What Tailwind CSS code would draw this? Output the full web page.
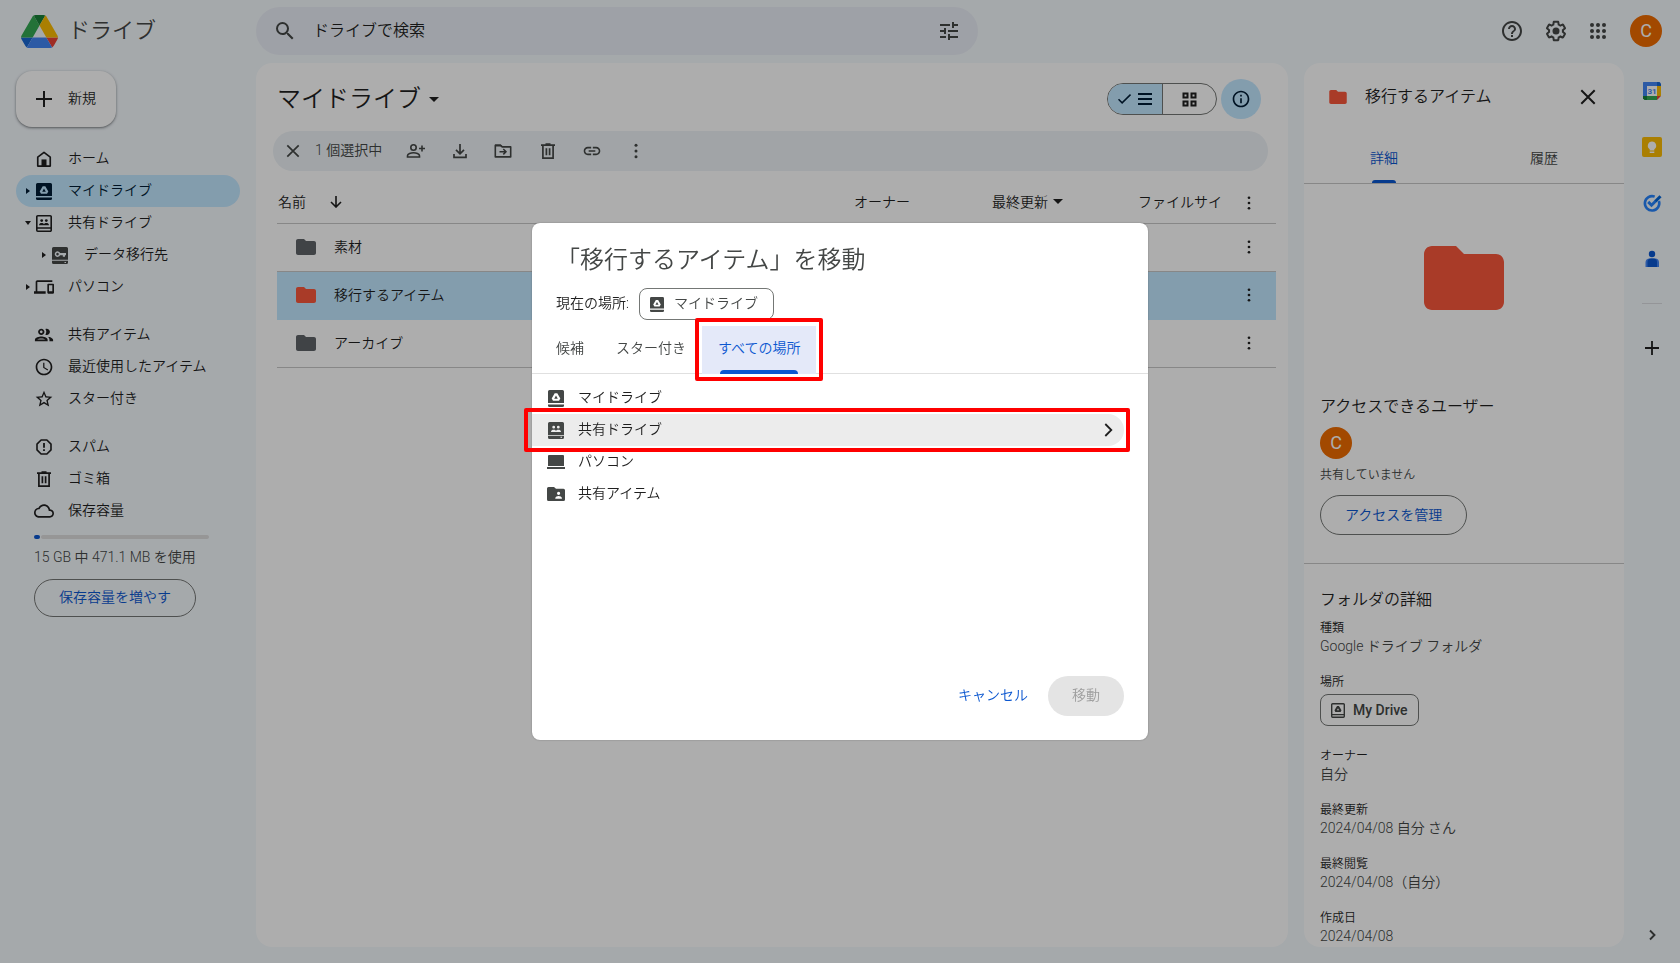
<!DOCTYPE html>
<html lang="ja">
<head>
<meta charset="utf-8">
<meta name="viewport" content="width=device-width, initial-scale=1">
<title>マイドライブ</title>
<script src="https://cdn.jsdelivr.net/npm/@tailwindcss/browser@4"></script>
</head>
<body class="h-screen overflow-hidden bg-[#f4f9fd] font-['Roboto','Noto_Sans_CJK_JP',sans-serif] text-sm font-[350] text-[#1f1f1f]">

<svg class="hidden" aria-hidden="true">
  <symbol id="folder" viewBox="2 4 20 16"><path fill="currentColor" d="M10 4H4c-1.1 0-2 .9-2 2v12c0 1.1.9 2 2 2h16c1.1 0 2-.9 2-2V8c0-1.1-.9-2-2-2h-8l-2-2z"/></symbol>
  <symbol id="dots" viewBox="0 0 24 24"><g fill="currentColor"><circle cx="12" cy="5" r="1.8"/><circle cx="12" cy="12" r="1.8"/><circle cx="12" cy="19" r="1.8"/></g></symbol>
  <symbol id="trash" viewBox="0 0 20 20"><path fill="none" stroke="currentColor" stroke-width="1.7" d="M3 4.2h14M7.500 3h5M4.900 4.500v12.600h10.200V4.500M8.400 7.200v7M11.600 7.200v7"/></symbol>
  <symbol id="drive-solid" viewBox="0 0 16 17"><path fill="currentColor" fill-rule="evenodd" d="M1.500 0h13A1.500 1.500 0 0 1 16 1.500V13H0V1.500A1.500 1.500 0 0 1 1.500 0zM6.700 3.300h2.600l3 5.200-1.300 2.300H5L3.700 8.500zM8 5.500 6.200 8.700h3.600z"/><path fill="currentColor" d="M0 14.500h16v1A1.500 1.500 0 0 1 14.500 17h-13A1.500 1.500 0 0 1 0 15.500z"/></symbol>
  <symbol id="drive-line" viewBox="0 0 16 17"><path fill="none" stroke="currentColor" stroke-width="1.600" d="M1.800.8h12.400a1 1 0 0 1 1 1v13.400a1 1 0 0 1-1 1H1.800a1 1 0 0 1-1-1V1.800a1 1 0 0 1 1-1zM1 13.200h14"/><path fill="currentColor" fill-rule="evenodd" d="M6.900 3.300h2.200l2.900 5-1 2H5l-1-2zM8 6 6.700 8.300h2.600z"/></symbol>
  <symbol id="shared-line" viewBox="0 0 16 17"><path fill="none" stroke="currentColor" stroke-width="1.600" d="M1.800.8h12.400a1 1 0 0 1 1 1v13.400a1 1 0 0 1-1 1H1.800a1 1 0 0 1-1-1V1.800a1 1 0 0 1 1-1zM1 13h14"/><g fill="currentColor"><circle cx="5.700" cy="5.600" r="1.400"/><circle cx="10.300" cy="5.600" r="1.400"/><path d="M3 10.200c0-1.700 1.400-2.300 2.600-2.300s2 .5 2.400 1c.4-.5 1.200-1 2.400-1s2.600.6 2.600 2.300z"/></g></symbol>
  <symbol id="shared-solid" viewBox="0 0 16 17"><path fill="currentColor" fill-rule="evenodd" d="M1.500 0h13A1.500 1.500 0 0 1 16 1.500v14a1.500 1.500 0 0 1-1.500 1.500h-13A1.500 1.500 0 0 1 0 15.500v-14A1.500 1.500 0 0 1 1.500 0zM4.300 5.200a1.400 1.400 0 1 0 2.800 0a1.400 1.400 0 1 0-2.800 0zM8.900 5.200a1.400 1.400 0 1 0 2.800 0a1.400 1.400 0 1 0-2.800 0zM3 10c0-1.700 1.400-2.300 2.600-2.300s2 .5 2.400 1c.4-.5 1.200-1 2.400-1s2.600.6 2.600 2.300zM0 13v.7h16v-.7zM12.500 14.800v1h1.500v-1z"/></symbol>
  <symbol id="key-solid" viewBox="0 0 16 17"><path fill="currentColor" fill-rule="evenodd" d="M1.500 0h13A1.500 1.500 0 0 1 16 1.500v14a1.500 1.500 0 0 1-1.500 1.500h-13A1.500 1.500 0 0 1 0 15.500v-14A1.500 1.500 0 0 1 1.500 0zM0 12.800v1h16v-1zM12.500 14.900v1.100h1.500v-1.100zM8.100 6H14v2.200h-1v1.600h-2.200V8.200H8.100a2.800 2.800 0 1 1 0-2.200zM5.500 5.800a1.300 1.300 0 1 0 .01 0z"/></symbol>
</svg>

<div class="flex h-full flex-col">
  <header class="flex h-[63px] shrink-0 items-start pt-[7px]">
    <a href="#" class="flex h-12 w-64 shrink-0 items-center gap-[10px] pl-[21px] text-[22px] text-[#444746]" aria-label="ドライブ">
      <svg class="h-[33px] w-[37px]" viewBox="0 0 87.300 78"><path d="m6.600 66.850 3.850 6.650c.8 1.400 1.950 2.500 3.300 3.300l13.750-23.800h-27.500c0 1.550.4 3.100 1.200 4.500z" fill="#1967d2"/><path d="m43.650 25-13.750-23.800c-1.350.8-2.500 1.900-3.300 3.300l-25.400 44a9.060 9.060 0 0 0-1.200 4.500h27.500z" fill="#34a853"/><path d="m73.550 76.800c1.350-.8 2.500-1.900 3.300-3.300l1.600-2.750 7.650-13.250c.8-1.400 1.200-2.950 1.200-4.500h-27.500z" fill="#ea4335"/><path d="m43.650 25 13.750-23.800c-1.350-.8-2.900-1.200-4.500-1.200h-18.500c-1.600 0-3.150.45-4.500 1.200z" fill="#188038"/><path d="m59.800 53h-32.300l-13.750 23.800c1.350.8 2.900 1.200 4.500 1.200h50.800c1.600 0 3.150-.45 4.500-1.200z" fill="#4285f4"/><path d="m73.400 26.500-12.700-22c-.8-1.400-1.950-2.500-3.300-3.300l-13.750 23.800 16.150 28h27.450c0-1.550-.4-3.100-1.200-4.500z" fill="#fbbc04"/></svg>
      <span>ドライブ</span>
    </a>
    <form role="search" class="flex h-12 max-w-[722px] flex-1 items-center rounded-full bg-[#e9eef6] px-[17px] text-[#444746]">
      <button type="button" aria-label="検索"><svg class="size-6" viewBox="0 0 24 24"><path fill="currentColor" d="M15.500 14h-.79l-.28-.27A6.471 6.471 0 0 0 16 9.500 6.500 6.500 0 1 0 9.500 16c1.610 0 3.090-.59 4.230-1.570l.27.28v.79l5 4.990L20.490 19l-4.990-5zm-6 0C7.010 14 5 11.990 5 9.500S7.010 5 9.500 5 14 7.010 14 9.500 11.990 14 9.500 14z"/></svg></button>
      <input type="text" aria-label="ドライブで検索" placeholder="ドライブで検索" class="ml-4 min-w-0 flex-1 bg-transparent text-base text-[#1f1f1f] outline-none placeholder:text-[#1f1f1f]">
      <button type="button" aria-label="検索オプション"><svg class="size-6" viewBox="0 0 24 24"><path fill="currentColor" d="M3 17v2h6v-2H3zM3 5v2h10V5H3zm10 16v-2h8v-2h-8v-2h-2v6h2zM7 9v2H3v2h4v2h2V9H7zm14 4v-2H11v2h10zm-6-4h2V7h4V5h-4V3h-2v6z"/></svg></button>
    </form>
    <div class="ml-auto flex h-12 items-center pr-[18px] text-[#444746]">
      <button type="button" aria-label="サポート"><svg class="size-6" viewBox="0 0 24 24"><path fill="currentColor" d="M11 18h2v-2h-2v2zm1-16C6.480 2 2 6.480 2 12s4.480 10 10 10 10-4.480 10-10S17.520 2 12 2zm0 18c-4.410 0-8-3.590-8-8s3.590-8 8-8 8 3.590 8 8-3.590 8-8 8zm0-14c-2.210 0-4 1.790-4 4h2c0-1.100.9-2 2-2s2 .9 2 2c0 2-3 1.750-3 5h2c0-2.250 3-2.500 3-5 0-2.210-1.790-4-4-4z"/></svg></button>
      <button type="button" aria-label="設定" class="ml-5"><svg class="size-6" viewBox="0 0 24 24"><path fill="currentColor" d="M13.850 22.250h-3.700c-.74 0-1.360-.54-1.450-1.270l-.27-1.890c-.27-.14-.53-.29-.79-.46l-1.800.72c-.7.26-1.470-.03-1.810-.65L2.200 15.530c-.35-.66-.2-1.440.36-1.880l1.530-1.190c-.01-.15-.02-.3-.02-.46 0-.15.01-.31.02-.46l-1.520-1.190c-.59-.45-.74-1.260-.37-1.880l1.850-3.190c.34-.62 1.110-.9 1.790-.63l1.810.73c.26-.17.52-.32.78-.46l.27-1.910c.09-.7.71-1.250 1.440-1.250h3.700c.74 0 1.360.54 1.450 1.270l.27 1.890c.27.14.53.29.79.46l1.800-.72c.71-.26 1.480.03 1.820.65l1.840 3.180c.36.66.2 1.440-.36 1.880l-1.520 1.190c.01.15.02.3.02.46s-.01.31-.02.46l1.520 1.190c.56.45.72 1.230.37 1.860l-1.860 3.220c-.34.62-1.110.9-1.800.63l-1.800-.72c-.26.17-.52.32-.78.46l-.27 1.910c-.1.68-.72 1.220-1.460 1.220zm-3.230-2h2.760l.37-2.550.53-.22c.44-.18.88-.44 1.340-.78l.45-.34 2.380.96 1.380-2.400-2.030-1.580.07-.56c.03-.26.06-.51.06-.78s-.03-.53-.06-.78l-.07-.56 2.030-1.580-1.390-2.400-2.390.96-.45-.35c-.42-.32-.87-.58-1.330-.77l-.52-.22-.37-2.550h-2.760l-.37 2.550-.53.21c-.44.19-.88.44-1.340.79l-.45.33-2.380-.95-1.390 2.390 2.030 1.580-.07.56a7 7 0 0 0-.06.79c0 .26.02.53.06.78l.07.56-2.030 1.580 1.380 2.400 2.390-.96.45.35c.43.33.86.58 1.330.77l.53.22.380 2.550z"/><circle cx="12" cy="12" r="3.500" fill="currentColor"/></svg></button>
      <button type="button" aria-label="Google アプリ" class="ml-[18px]"><svg class="size-6" viewBox="0 0 24 24" fill="currentColor"><circle cx="6" cy="6" r="2"/><circle cx="12" cy="6" r="2"/><circle cx="18" cy="6" r="2"/><circle cx="6" cy="12" r="2"/><circle cx="12" cy="12" r="2"/><circle cx="18" cy="12" r="2"/><circle cx="6" cy="18" r="2"/><circle cx="12" cy="18" r="2"/><circle cx="18" cy="18" r="2"/></svg></button>
      <button type="button" aria-label="アカウント" class="ml-5 size-8 rounded-full bg-[#ef6c00] text-lg leading-8 font-normal text-white">C</button>
    </div>
  </header>

  <div class="flex min-h-0 flex-1 pb-4">
    <aside class="w-64 shrink-0 px-4 pt-2">
      <button type="button" class="flex h-14 items-center gap-3 rounded-2xl bg-white pr-5 pl-4 shadow-[0_1px_2px_rgba(60,64,67,0.5),0_1px_3px_1px_rgba(60,64,67,0.15)]">
        <svg class="size-6" viewBox="0 0 24 24"><path d="M12 4v16M4 12h16" stroke="currentColor" stroke-width="2"/></svg>
        <span class="pb-0.5">新規</span>
      </button>
      <nav class="mt-4 text-[#1f1f1f]">
        <a href="#" class="flex h-8 items-center gap-[14px] pl-[18px]"><svg class="size-5" viewBox="0 0 24 24"><path fill="none" stroke="currentColor" stroke-width="2" stroke-linejoin="round" d="M4.500 20.500V9.800L12 4l7.500 5.800v10.700z"/><path fill="currentColor" d="M9 12.500h6v8H9z"/></svg><span class="pb-0.5">ホーム</span></a>
        <a href="#" class="flex h-8 items-center rounded-full bg-[#c2e7ff] pl-[10px] text-[#001d35]"><svg class="mr-[6px] h-[6px] w-1" viewBox="0 0 4 6"><path fill="currentColor" d="M0 0l4 3-4 3z"/></svg><svg class="h-[17px] w-4" ><use href="#drive-solid"/></svg><span class="ml-4 pb-0.5">マイドライブ</span></a>
        <a href="#" class="flex h-8 items-center pl-[9px]"><svg class="mr-[5px] h-1 w-[6px]" viewBox="0 0 6 4"><path fill="currentColor" d="M0 0h6L3 4z"/></svg><svg class="h-[17px] w-4"><use href="#shared-line"/></svg><span class="ml-4 pb-0.5">共有ドライブ</span></a>
        <a href="#" class="flex h-8 items-center pl-[26px]"><svg class="mr-[6px] h-[6px] w-1" viewBox="0 0 4 6"><path fill="currentColor" d="M0 0l4 3-4 3z"/></svg><svg class="h-[17px] w-4 text-[#444746]"><use href="#key-solid"/></svg><span class="ml-4 pb-0.5">データ移行先</span></a>
        <a href="#" class="flex h-8 items-center pl-[10px]"><svg class="mr-1 h-[6px] w-1" viewBox="0 0 4 6"><path fill="currentColor" d="M0 0l4 3-4 3z"/></svg><svg class="size-5" viewBox="0 0 24 24"><path fill="currentColor" d="M4 6h18V4H4c-1.100 0-2 .9-2 2v11H0v3h14v-3H4V6zm19 2h-6c-.55 0-1 .45-1 1v10c0 .55.450 1 1 1h6c.55 0 1-.45 1-1V9c0-.55-.45-1-1-1zm-1 9h-4v-7h4v7z"/></svg><span class="ml-[14px] pb-0.5">パソコン</span></a>
        <a href="#" class="mt-4 flex h-8 items-center gap-[14px] pl-[18px]"><svg class="size-5" viewBox="1 1 22 22"><path fill="currentColor" d="M9 13.750c-2.340 0-7 1.170-7 3.500V19h14v-1.750c0-2.330-4.660-3.500-7-3.500zM4.340 17c.84-.58 2.870-1.250 4.660-1.250s3.820.67 4.660 1.250H4.340zM9 12c1.930 0 3.500-1.570 3.500-3.500S10.930 5 9 5 5.500 6.570 5.500 8.500 7.070 12 9 12zm0-5c.83 0 1.500.67 1.500 1.500S9.830 10 9 10s-1.500-.67-1.500-1.500S8.170 7 9 7zm7.040 6.810c1.160.84 1.960 1.960 1.960 3.440V19h4v-1.750c0-2.020-3.500-3.170-5.960-3.440zM15 12c1.930 0 3.500-1.570 3.500-3.500S16.930 5 15 5c-.54 0-1.040.13-1.500.35.63.89 1 1.980 1 3.150s-.37 2.260-1 3.150c.46.22.96.35 1.500.35z"/></svg><span class="pb-0.5">共有アイテム</span></a>
        <a href="#" class="flex h-8 items-center gap-[14px] pl-[18px]"><svg class="size-5" viewBox="0 0 24 24"><path fill="currentColor" d="M11.990 2C6.470 2 2 6.480 2 12s4.470 10 9.990 10C17.520 22 22 17.520 22 12S17.520 2 11.990 2zM12 20c-4.420 0-8-3.580-8-8s3.580-8 8-8 8 3.580 8 8-3.580 8-8 8zm.5-13H11v6l5.250 3.150.75-1.230-4.500-2.670z"/></svg><span class="pb-0.5">最近使用したアイテム</span></a>
        <a href="#" class="flex h-8 items-center gap-[14px] pl-[18px]"><svg class="size-5" viewBox="0 0 24 24"><path fill="currentColor" d="M22 9.240l-7.190-.62L12 2 9.190 8.630 2 9.240l5.460 4.730L5.820 21 12 17.270 18.180 21l-1.630-7.030L22 9.240zM12 15.400l-3.760 2.270 1-4.280-3.320-2.880 4.380-.38L12 6.100l1.710 4.040 4.380.38-3.320 2.880 1 4.280L12 15.400z"/></svg><span class="pb-0.5">スター付き</span></a>
        <a href="#" class="mt-4 flex h-8 items-center gap-[14px] pl-[18px]"><svg class="size-5" viewBox="0 0 20 20"><path fill="none" stroke="currentColor" stroke-width="1.600" stroke-linejoin="round" d="M7.100 3h5.800L17 7.100v5.800L12.900 17H7.100L3 12.900V7.100z"/><path stroke="currentColor" stroke-width="1.800" d="M10 6v4.800M10 12.300v1.700"/></svg><span class="pb-0.5">スパム</span></a>
        <a href="#" class="flex h-8 items-center gap-[14px] pl-[18px]"><svg class="size-5"><use href="#trash"/></svg><span class="pb-0.5">ゴミ箱</span></a>
        <a href="#" class="flex h-8 items-center gap-[14px] pl-[18px]"><svg class="size-5" viewBox="0 0 24 24"><path fill="currentColor" d="M19.350 10.040C18.670 6.590 15.640 4 12 4 9.110 4 6.600 5.640 5.350 8.040 2.340 8.360 0 10.910 0 14c0 3.310 2.690 6 6 6h13c2.760 0 5-2.240 5-5 0-2.640-2.050-4.780-4.650-4.960zM19 18H6c-2.210 0-4-1.790-4-4 0-2.050 1.530-3.760 3.560-3.970l1.070-.11.5-.95C8.080 7.140 9.940 6 12 6c2.620 0 4.880 1.860 5.390 4.430l.3 1.500 1.530.11c1.560.1 2.780 1.410 2.780 2.960 0 1.650-1.350 3-3 3z"/></svg><span class="pb-0.5">保存容量</span></a>
      </nav>
      <div class="mt-2 pl-[18px]">
        <div class="flex h-1 w-[175px] gap-px"><span class="w-[6px] rounded-full bg-[#0b57d0]"></span><span class="flex-1 rounded-full bg-[#dddddd]"></span></div>
        <p class="mt-2 leading-5 text-[#444746]">15 GB 中 471.1 MB を使用</p>
        <button type="button" class="mt-3 h-[38px] rounded-full border border-[#747775] px-6 pb-0.5 text-[#0b57d0]">保存容量を増やす</button>
      </div>
    </aside>

    <main class="flex min-w-0 flex-1 flex-col rounded-2xl bg-white">
      <div class="flex h-[68px] shrink-0 items-center pt-1 pr-[27px] pl-[21px]">
        <h1><button type="button" class="flex items-center gap-2 text-2xl">マイドライブ<svg class="h-[5px] w-[10px]" viewBox="0 0 10 5"><path fill="currentColor" d="M0 0h10L5 5z"/></svg></button></h1>
        <div class="ml-auto flex h-8 w-[110px] overflow-hidden rounded-full border border-[#747775]">
          <button type="button" aria-label="リスト レイアウト" aria-pressed="true" class="flex flex-1 items-center justify-center gap-[7px] bg-[#c2e7ff] text-[#001d35]">
            <svg class="h-[10px] w-[13px]" viewBox="0 0 13 10"><path fill="none" stroke="currentColor" stroke-width="1.500" d="M.5 5.300l3.600 3.600L12.500.6"/></svg>
            <svg class="h-3 w-[14px]" viewBox="0 0 14 12"><path stroke="currentColor" stroke-width="2" d="M0 1h14M0 6h14M0 11h14"/></svg>
          </button>
          <button type="button" aria-label="グリッド レイアウト" aria-pressed="false" class="flex flex-1 items-center justify-center border-l border-[#747775]">
            <svg class="size-[15px]" viewBox="0 0 15 15" fill="none" stroke="currentColor" stroke-width="2"><rect x="1.500" y="1.500" width="4" height="4"/><rect x="9.500" y="1.500" width="4" height="4"/><rect x="1.500" y="9.500" width="4" height="4"/><rect x="9.500" y="9.500" width="4" height="4"/></svg>
          </button>
        </div>
        <button type="button" aria-label="詳細を表示" class="ml-1 flex size-10 items-center justify-center rounded-full bg-[#c2e7ff] text-[#001d35]"><svg class="size-5" viewBox="0 0 24 24"><path fill="currentColor" d="M11 7h2v2h-2zm0 4h2v6h-2zm1-9C6.480 2 2 6.480 2 12s4.480 10 10 10 10-4.480 10-10S17.520 2 12 2zm0 18c-4.410 0-8-3.590-8-8s3.590-8 8-8 8 3.590 8 8-3.590 8-8 8z"/></svg></button>
      </div>

      <div class="mr-5 ml-[17px] flex h-10 shrink-0 items-center rounded-full bg-[#edf2f6] pl-[10px] text-[#444746]">
        <button type="button" aria-label="選択を解除"><svg class="size-5" viewBox="0 0 20 20"><path stroke="currentColor" stroke-width="1.700" d="M4.300 4.300l11.400 11.400M15.700 4.300L4.300 15.700"/></svg></button>
        <span class="ml-3 w-[79px] pb-0.5">1 個選択中</span>
        <div class="ml-3 flex items-center gap-6">
          <button type="button" aria-label="共有"><svg class="size-5" viewBox="0 0 20 20" fill="none" stroke="currentColor" stroke-width="1.600"><circle cx="7.500" cy="6.500" r="2.700"/><path d="M1.500 16v-1.300c0-1.900 3.500-2.900 6-2.900s6 1 6 2.900V16zM16 4.500v6M13 7.500h6"/></svg></button>
          <button type="button" aria-label="ダウンロード"><svg class="size-5" viewBox="0 0 20 20" fill="none" stroke="currentColor" stroke-width="1.700"><path d="M10 3v9.500M6 8.800l4 4 4-4M4 13v3.300h12V13"/></svg></button>
          <button type="button" aria-label="移動"><svg class="size-5" viewBox="1 0 20 20"><path fill="none" stroke="currentColor" stroke-width="1.600" stroke-linejoin="round" d="M2.300 4.200h5.200l1.700 1.700h8.500v10H2.300z"/><path fill="currentColor" d="M2 3.500h5.700l2 2H2z"/><path fill="none" stroke="currentColor" stroke-width="1.500" d="M6.500 10.700h6M10.300 8l2.700 2.700-2.700 2.700"/></svg></button>
          <button type="button" aria-label="削除"><svg class="size-5"><use href="#trash"/></svg></button>
          <button type="button" aria-label="リンクをコピー"><svg class="size-5" viewBox="0 0 24 24"><path fill="currentColor" d="M3.900 12c0-1.710 1.390-3.100 3.100-3.100h4V7H7c-2.760 0-5 2.240-5 5s2.240 5 5 5h4v-1.900H7c-1.710 0-3.100-1.390-3.100-3.100zM8 13h8v-2H8v2zm9-6h-4v1.900h4c1.710 0 3.100 1.390 3.100 3.100s-1.390 3.100-3.100 3.100h-4V17h4c2.760 0 5-2.240 5-5s-2.240-5-5-5z"/></svg></button>
          <button type="button" aria-label="その他の操作"><svg class="size-5"><use href="#dots"/></svg></button>
        </div>
      </div>

      <div class="mt-3 mr-3 ml-[21px]">
        <table class="w-full table-fixed text-left">
          <thead>
            <tr class="h-10 border-b border-[#c7c7c7]">
              <th scope="col" class="pb-0.5 pl-px font-[350]"><span class="flex items-center gap-6">名前<svg class="h-3 w-3" viewBox="0 0 12 12"><path fill="none" stroke="currentColor" stroke-width="1.600" d="M6 0v11M1 6l5 5 5-5"/></svg></span></th>
              <th scope="col" class="w-[138px] pb-0.5 font-[350]">オーナー</th>
              <th scope="col" class="w-[146px] pb-0.5 font-[350]"><span class="flex items-center gap-[5px]">最終更新<svg class="h-[5px] w-[10px]" viewBox="0 0 10 5"><path fill="currentColor" d="M0 0h10L5 5z"/></svg></span></th>
              <th scope="col" class="w-[84px] overflow-hidden pb-0.5 font-[350] whitespace-nowrap">ファイルサイ</th>
              <th scope="col" class="w-[54px]"><button type="button" aria-label="その他の並べ替え" class="flex w-full justify-center"><svg class="size-[18px]"><use href="#dots"/></svg></button></th>
            </tr>
          </thead>
          <tbody>
            <tr class="h-12 border-b border-[#c7c7c7]">
              <td colspan="4"><span class="flex items-center gap-[18px] pl-[19px]"><svg class="h-4 w-5 text-[#5f6368]"><use href="#folder"/></svg>素材</span></td>
              <td><button type="button" aria-label="素材の操作" class="flex w-full justify-center"><svg class="size-[18px]"><use href="#dots"/></svg></button></td>
            </tr>
            <tr class="h-12 border-b border-[#c2e7ff] bg-[#c2e7ff]">
              <td colspan="4"><span class="flex items-center gap-[18px] pl-[19px]"><svg class="h-4 w-5 text-[#fa573c]"><use href="#folder"/></svg>移行するアイテム</span></td>
              <td><button type="button" aria-label="移行するアイテムの操作" class="flex w-full justify-center"><svg class="size-[18px]"><use href="#dots"/></svg></button></td>
            </tr>
            <tr class="h-12 border-b border-[#c7c7c7]">
              <td colspan="4"><span class="flex items-center gap-[18px] pl-[19px]"><svg class="h-4 w-5 text-[#5f6368]"><use href="#folder"/></svg>アーカイブ</span></td>
              <td><button type="button" aria-label="アーカイブの操作" class="flex w-full justify-center"><svg class="size-[18px]"><use href="#dots"/></svg></button></td>
            </tr>
          </tbody>
        </table>
      </div>
    </main>

    <section aria-label="詳細" class="ml-4 w-80 shrink-0 overflow-hidden rounded-2xl bg-white">
      <div class="flex h-[68px] items-center pr-[27px] pl-[25px]">
        <svg class="h-[14px] w-[18px] text-[#fa573c]"><use href="#folder"/></svg>
        <h2 class="ml-[18px] text-base font-[350]">移行するアイテム</h2>
        <button type="button" aria-label="閉じる" class="ml-auto"><svg class="size-[18px]" viewBox="0 0 18 18"><path stroke="currentColor" stroke-width="2" d="M2.300 2.300l13.400 13.400M15.700 2.300L2.300 15.700"/></svg></button>
      </div>
      <div role="tablist" class="flex h-[53px] border-b border-[#c7c7c7]">
        <button type="button" role="tab" aria-selected="true" class="flex flex-1 flex-col items-center text-[#0b57d0]"><span class="flex flex-1 items-center pt-1">詳細</span><span class="h-[3px] w-6 rounded-t bg-[#0b57d0]"></span></button>
        <button type="button" role="tab" aria-selected="false" class="flex flex-1 flex-col items-center text-[#444746]"><span class="flex flex-1 items-center pt-1">履歴</span><span class="h-[3px]"></span></button>
      </div>
      <div class="flex h-[211px] justify-center pt-[62px]"><svg class="h-16 w-20 text-[#fa573c]"><use href="#folder"/></svg></div>
      <div class="border-b border-[#c7c7c7] px-4 pb-7">
        <h3 class="text-base leading-6">アクセスできるユーザー</h3>
        <div class="mt-2 size-8 rounded-full bg-[#ef6c00] text-center text-lg leading-8 font-normal text-white">C</div>
        <p class="mt-2 text-xs text-[#444746]">共有していません</p>
        <button type="button" class="mt-3 h-10 rounded-full border border-[#747775] px-6 text-[#0b57d0]">アクセスを管理</button>
      </div>
      <div class="px-4 pt-6">
        <h3 class="text-base leading-6">フォルダの詳細</h3>
        <dl class="mt-[7px]">
          <dt class="text-xs leading-[18px]">種類</dt><dd class="leading-[18px] text-[#444746]">Google ドライブ フォルダ</dd>
          <dt class="mt-[18px] text-xs leading-[18px]">場所</dt>
          <dd class="mt-[3px]"><button type="button" class="flex h-8 items-center gap-2 rounded-lg border border-[#747775] px-[10px] font-medium text-[#444746]"><svg class="h-[15px] w-[14px]"><use href="#drive-line"/></svg>My Drive</button></dd>
          <dt class="mt-[21px] text-xs leading-[18px]">オーナー</dt><dd class="leading-[18px] text-[#444746]">自分</dd>
          <dt class="mt-[18px] text-xs leading-[18px]">最終更新</dt><dd class="leading-[18px] text-[#444746]">2024/04/08 自分 さん</dd>
          <dt class="mt-[18px] text-xs leading-[18px]">最終閲覧</dt><dd class="leading-[18px] text-[#444746]">2024/04/08（自分）</dd>
          <dt class="mt-[18px] text-xs leading-[18px]">作成日</dt><dd class="leading-[18px] text-[#444746]">2024/04/08</dd>
        </dl>
      </div>
    </section>

    <aside aria-label="サイドパネル" class="flex w-14 shrink-0 flex-col items-center pt-[18px]">
      <button type="button" aria-label="カレンダー"><svg class="size-5" viewBox="0 0 20 20"><path fill="#fff" d="M4 4h12v12H4z"/><path fill="#4285f4" d="M1.500 1H15v4H5v10H1V1.500z"/><path fill="#1967d2" d="M15 1h2.500L19 2.500V5h-4z"/><path fill="#fbbc04" d="M15 5h4v10h-4z"/><path fill="#34a853" d="M5 15h10v4H5z"/><path fill="#188038" d="M1 15h4v4H2.500L1 17.500z"/><path fill="#ea4335" d="M15 15h4l-4 4z"/><text x="10" y="13" text-anchor="middle" font-size="8" font-weight="700" fill="#4285f4">31</text></svg></button>
      <button type="button" aria-label="Keep" class="mt-9"><svg class="size-5" viewBox="0 0 20 20"><rect width="20" height="20" rx="2" fill="#fbbc04"/><path fill="#fff" d="M10 4.500a4.200 4.200 0 0 0-2.300 7.700V13.500h4.600v-1.300A4.200 4.200 0 0 0 10 4.500zM7.700 14.500h4.600V16H7.700z"/></svg></button>
      <button type="button" aria-label="ToDo リスト" class="mt-9"><svg class="size-5" viewBox="0 0 20 20"><path fill="none" stroke="#2684fc" stroke-width="2.600" d="M12.700 3.600A7.200 7.200 0 1 0 16.900 8"/><path fill="none" stroke="#2684fc" stroke-width="3" d="M6.200 8.900l3.300 3.300 4.500-4.500"/><path fill="none" stroke="#0066da" stroke-width="3" d="M13.500 8.200L18.500 3.200"/></svg></button>
      <button type="button" aria-label="連絡先" class="mt-9"><svg class="size-5" viewBox="0 0 20 20"><circle cx="10" cy="5" r="3.200" fill="#0b57d0"/><path fill="#4285f4" d="M3.500 18v-4.500A4 4 0 0 1 7 9.500h6a4 4 0 0 1 4 4V18z"/><path fill="#0b57d0" d="M5.500 18v-5A3.500 3.500 0 0 1 9 9.500h2.500A3.500 3.500 0 0 1 15 13v5z"/></svg></button>
      <span class="mt-[34px] h-px w-5 bg-[#dadce0]"></span>
      <button type="button" aria-label="アドオンを取得" class="mt-[34px]"><svg class="size-5" viewBox="0 0 20 20"><path stroke="currentColor" stroke-width="1.800" d="M10 3v14M3 10h14"/></svg></button>
      <button type="button" aria-label="サイドパネルを非表示" class="mt-auto mb-[2px] text-[#444746]"><svg class="size-5" viewBox="0 0 20 20"><path fill="none" stroke="currentColor" stroke-width="1.900" d="M8 5.500l4.500 4.500L8 14.500"/></svg></button>
    </aside>
  </div>
</div>

<div class="fixed inset-0 flex items-center justify-center bg-black/32">
  <div role="dialog" aria-modal="true" aria-labelledby="move-title" class="flex h-[517px] w-[616px] flex-col rounded-lg bg-white shadow-[0_0_2px_rgba(0,0,0,0.3)]">
    <h2 id="move-title" class="mt-[21px] pl-6 text-2xl leading-8 text-[#444746]">「移行するアイテム」を移動</h2>
    <div class="mt-3 flex h-8 items-center pl-6">
      <span class="pb-0.5">現在の場所:</span>
      <button type="button" class="ml-[10px] flex h-8 items-center gap-[10px] rounded-lg border border-[#747775] pr-[15px] pl-[10px] text-[#444746]"><svg class="h-[15px] w-[14px]"><use href="#drive-solid"/></svg><span class="pb-0.5">マイドライブ</span></button>
    </div>
    <div role="tablist" class="mt-[6px] flex h-12 shadow-[inset_0_-1px_0_#e0e0e0]">
      <button type="button" role="tab" aria-selected="false" class="pr-4 pb-1 pl-6 text-[#444746]">候補</button>
      <button type="button" role="tab" aria-selected="false" class="px-4 pb-1 text-[#444746]">スター付き</button>
      <button type="button" role="tab" aria-selected="true" class="relative flex flex-col items-center bg-[#e4e9f9] px-4 text-[#0b57d0]">
        <span class="flex flex-1 items-center">すべての場所</span>
        <span class="h-1 w-[78px] rounded-t bg-[#0b57d0]"></span>
        <span class="absolute -inset-x-[7px] -top-2 -bottom-[7px] z-10 rounded-xs border-4 border-[#ff0000]"></span>
      </button>
    </div>
    <ul class="mt-2">
      <li><button type="button" class="flex h-8 w-full items-center gap-[14px] pl-4"><svg class="h-[17px] w-4 text-[#444746]"><use href="#drive-solid"/></svg><span class="pb-0.5">マイドライブ</span></button></li>
      <li class="relative mr-6"><button type="button" class="flex h-8 w-full items-center gap-[14px] rounded-r-full bg-[#ececec] pr-[11px] pl-4"><svg class="h-[17px] w-4 text-[#444746]"><use href="#shared-solid"/></svg><span class="pb-0.5">共有ドライブ</span><svg class="ml-auto h-[14px] w-[9px]" viewBox="0 0 9 14"><path fill="none" stroke="currentColor" stroke-width="1.800" d="M1.300 1l6 6-6 6"/></svg></button><span class="absolute -inset-y-[6px] -right-[6px] -left-2 rounded-xs border-4 border-[#ff0000]"></span></li>
      <li><button type="button" class="flex h-8 w-full items-center gap-[13px] pl-[15px]"><svg class="h-[14px] w-[18px] text-[#444746]" viewBox="0 0 18 14"><path fill="currentColor" d="M2 0h14a1 1 0 0 1 1 1v10H1V1a1 1 0 0 1 1-1zM0 12h18v2H0z"/></svg><span class="pb-0.5">パソコン</span></button></li>
      <li><button type="button" class="flex h-8 w-full items-center gap-[13px] pl-[15px]"><svg class="h-[14px] w-[18px] text-[#444746]" viewBox="0 0 18 14"><path fill="currentColor" fill-rule="evenodd" d="M1.500 0H7l2 1.800h7.500A1.500 1.500 0 0 1 18 3.300v9.200a1.500 1.500 0 0 1-1.500 1.500h-15A1.500 1.500 0 0 1 0 12.500v-11A1.500 1.500 0 0 1 1.500 0zM10 6.300a1.600 1.600 0 1 0 3.200 0a1.600 1.600 0 1 0-3.200 0zM8.300 11.800h6.600v-.6c0-1.500-2-2.200-3.300-2.200s-3.300.7-3.300 2.200z"/></svg><span class="pb-0.5">共有アイテム</span></button></li>
    </ul>
    <div class="mt-auto flex justify-end gap-2 pr-6 pb-6">
      <button type="button" class="h-10 rounded-full px-3 pb-0.5 text-[#0b57d0]">キャンセル</button>
      <button type="button" disabled class="h-10 rounded-full bg-[#e4e4e4] px-6 pb-0.5 text-[#9e9e9e]">移動</button>
    </div>
  </div>
</div>
</body>
</html>
